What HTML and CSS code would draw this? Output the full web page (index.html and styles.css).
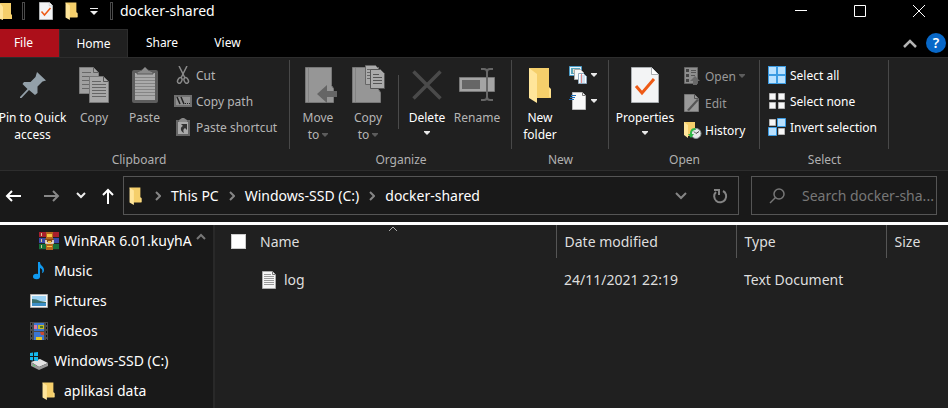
FILE: index.html
```html
<!DOCTYPE html>
<html lang="en">
<head>
<meta charset="utf-8">
<title>docker-shared</title>
<link rel="stylesheet" href="styles.css">
</head>
<body>
<svg class="defs" aria-hidden="true">
  <symbol id="folder" viewBox="0 0 24 36" preserveAspectRatio="none">
    <path d="M1 1h20v20l2 2v8H8z" fill="#f5cf6b"/>
    <path d="M1 1l8 6v29l-8-5z" fill="#ffe59a"/>
    <path d="M21 1v19l2 2v8h-2z" fill="#ffe08a"/>
  </symbol>
  <symbol id="check-page" viewBox="0 0 28 36">
    <path d="M.5.500h20l7 7v28H.5z" fill="#f3f4f5" stroke="#a9adb0"/>
    <path d="M20.500.5v7h7" fill="#fff" stroke="#a9adb0"/>
    <path d="M5 19l6 7 12-14" fill="none" stroke="#ee5a15" stroke-width="3"/>
  </symbol>
  <symbol id="caret" viewBox="0 0 6 4"><path d="M0 0h6v1L3 4 0 1z" fill="currentColor"/></symbol>
  <symbol id="chevron-right" viewBox="0 0 6 10"><path d="M1 1l4 4-4 4" fill="none" stroke="currentColor" stroke-width="2"/></symbol>
</svg>

<header class="titlebar">
  <div class="quick">
    <svg class="quick-folder" width="12" height="17" viewBox="0 0 12 17"><path d="M0 0h11v11l1 1v4H3z" fill="#f5cf6b"/><path d="M0 0l3 4v13L0 16z" fill="#ffe59a"/></svg>
    <span class="grip"></span>
    <button aria-label="Properties"><svg width="14" height="18"><use href="#check-page"/></svg></button>
    <button aria-label="New folder"><svg width="13" height="18"><use href="#folder"/></svg></button>
    <button aria-label="Customize"><svg width="8" height="7" viewBox="0 0 8 7"><path d="M0 0h8v1H0zM0 3h8L4 7z" fill="#eee"/></svg></button>
    <span class="grip"></span>
  </div>
  <h1>docker-shared</h1>
  <div class="window-controls">
    <button aria-label="Minimize"><svg width="12" height="12"><path d="M0 5.500h12" stroke="#fff"/></svg></button>
    <button aria-label="Maximize"><svg width="12" height="12"><path d="M.5.500h11v11H.5z" fill="none" stroke="#fff"/></svg></button>
    <button aria-label="Close"><svg width="12" height="12"><path d="M0 0l12 12M12 0L0 12" stroke="#fff"/></svg></button>
  </div>
</header>

<nav class="tabs">
  <button class="tab file">File</button>
  <button class="tab home">Home</button>
  <button class="tab share">Share</button>
  <button class="tab view">View</button>
  <button class="collapse" aria-label="Collapse ribbon"><svg width="14" height="9" viewBox="0 0 14 9"><path d="M1 8l6-6 6 6" fill="none" stroke="#b4b4b4" stroke-width="2.500"/></svg></button>
  <button class="help" aria-label="Help">?</button>
</nav>

<section class="ribbon">
  <div class="group clipboard">
    <div class="tools">
      <button class="big pin">
        <svg width="26" height="36" viewBox="0 0 26 36"><path d="M17 5l9 8.500-3.500 1-5 5v6.500l-2.500 2-6-5-7.500 8H0v-1l7.500-8-5-5 1.500-2h6.500l5-5z" fill="#93a0a9"/></svg>
        <span>Pin to Quick<br>access</span>
      </button>
      <button class="big copy dim">
        <svg width="30" height="36" viewBox="0 0 30 36">
          <path d="M.5.500h14l5 5v21H.5z" fill="#a0a0a0" stroke="#7c7c7c"/>
          <path d="M14.500.5v5h5" fill="none" stroke="#606060"/>
          <path d="M3 5.500h9M3 9.500h14M3 13.500h8M3 17.500h8M3 21.500h8" stroke="#686868"/>
          <path d="M10.500 9.500h14l5 5v21h-19z" fill="#a8a8a8" stroke="#777"/>
          <path d="M24.500 9.500v5h5" fill="none" stroke="#555"/>
          <path d="M13 14.500h9M13 17.500h14M13 20.500h14M13 23.500h14M13 26.500h14M13 29.500h14" stroke="#656565"/>
        </svg>
        <span>Copy</span>
      </button>
      <button class="big paste dim">
        <svg width="26" height="36" viewBox="0 0 26 36">
          <rect y="3" width="26" height="33" rx="2" fill="#5d5d5d"/>
          <path d="M3 6h20v27H3z" fill="#aaa"/>
          <path d="M3 10.500h20M3 13.500h20M3 16.500h20M3 19.500h20M3 22.500h20M3 25.500h20M3 28.500h20" stroke="#858585"/>
          <path d="M5 7V5l5-2 3-3 3 3 5 2v2z" fill="#8b8b8b" stroke="#595959"/>
        </svg>
        <span>Paste</span>
      </button>
      <div class="small-list dim">
        <button><svg width="18" height="18" viewBox="0 0 18 18"><path d="M5 0l6 12M13 0L7 12" stroke="#8a8a8a" stroke-width="1.500"/><ellipse cx="6" cy="14.500" rx="2" ry="3" fill="none" stroke="#8a8a8a" stroke-width="1.500" transform="rotate(25 6 14)"/><ellipse cx="12" cy="14.500" rx="2" ry="3" fill="none" stroke="#8a8a8a" stroke-width="1.500" transform="rotate(-25 12 14)"/></svg>Cut</button>
        <button><svg width="18" height="18" viewBox="0 0 18 18"><path d="M1 4h16v10H1z" fill="#929292" stroke="#707070" stroke-width="2"/><path d="M3 5l3 7M7 5l3 7" stroke="#222" stroke-width="1.500"/><path d="M11 11h1v1h-1zM13 11h1v1h-1zM15 11h1v1h-1z" fill="#222"/></svg>Copy path</button>
        <button><svg width="18" height="18" viewBox="0 0 18 18"><path d="M2 2h14v16H2z" fill="#666"/><path d="M4 4h10v12H4z" fill="#aaa"/><path d="M5 4V2l3-2h2l3 2v2z" fill="#888"/><path d="M7 6h6v6l-2-2c-2 1-2 3-1 5-4-2-4-6-1-7z" fill="#333"/></svg>Paste shortcut</button>
      </div>
    </div>
    <p>Clipboard</p>
  </div>

  <div class="group organize">
    <div class="tools">
      <button class="big move dim">
        <svg width="38" height="36" viewBox="0 0 38 36"><path d="M6.500.5h26v18l2 3v14h-28z" fill="#969696" stroke="#777"/><path d="M9.500 1v34" stroke="#838383"/><path d="M18 27l10-9v6h10v6H28v6z" fill="#656565"/></svg>
        <span>Move<br>to <svg class="caret" width="6" height="4"><use href="#caret"/></svg></span>
      </button>
      <button class="big copy-to dim">
        <svg width="34" height="38" viewBox="0 0 34 38"><path d="M1.500 2.500h26v22l2 3v10h-28z" fill="#969696" stroke="#777"/><path d="M4.500 3v34" stroke="#838383"/><path d="M14.500.5h10l4 4v15h-14z" fill="#aaa" stroke="#666"/><path d="M16 4.500h7M16 7.500h10M16 10.500h10M16 13.500h10" stroke="#666"/><path d="M19.500 4.500h10l4 4v15h-14z" fill="#aaa" stroke="#555"/><path d="M22 9.500h6M22 12.500h9M22 15.500h9M22 18.500h9" stroke="#555"/></svg>
        <span>Copy<br>to <svg class="caret" width="6" height="4"><use href="#caret"/></svg></span>
      </button>
      <span class="divider"></span>
      <button class="big delete">
        <svg width="30" height="36" viewBox="0 0 30 36"><path d="M1.500 4.500l27 27M28.500 4.500l-27 27" stroke="#4a4a4a" stroke-width="3.500"/></svg>
        <span>Delete</span>
        <svg class="caret" width="6" height="4"><use href="#caret"/></svg>
      </button>
      <button class="big rename dim">
        <svg width="36" height="36" viewBox="0 0 36 36"><path d="M.5 10.500h35v14H.5z" fill="#a4a4a4" stroke="#777"/><path d="M3 13h18v9H3z" fill="#666"/><path d="M22 2h3q3 0 3 3v25q0 3-3 3h-3M34 2h-3q-3 0-3 3M34 33h-3q-3 0-3-3" fill="none" stroke="#666" stroke-width="2"/></svg>
        <span>Rename</span>
      </button>
    </div>
    <p>Organize</p>
  </div>

  <div class="group new">
    <div class="tools">
      <button class="big new-folder">
        <svg width="24" height="36"><use href="#folder"/></svg>
        <span>New<br>folder</span>
      </button>
      <div class="small-list">
        <button aria-label="New item"><svg width="18" height="18" viewBox="0 0 18 18"><path d="M.5.500h12v9H.5z" fill="#e7f3fa" stroke="#4b9cc8"/><path d="M2 2h9v6H2z" fill="#57a4ba"/><path d="M4 3h3v4H4z" fill="#e8ddc4"/><path d="M5.500 3.500h6l3 3v7h-9z" fill="#f7f7f7" stroke="#aaa"/><path d="M9.500 7.500h5l3 3v7h-8z" fill="#fff" stroke="#8fa8bd"/><path d="M11 10h5M11 12h5M11 14h5M11 16h5" stroke="#a9c9e5"/><path d="M12.500 8v9" stroke="#e58b8b"/></svg><svg class="caret" width="6" height="4"><use href="#caret"/></svg></button>
        <button aria-label="Easy access"><svg width="18" height="18" viewBox="0 0 18 18"><path d="M3.500.500h10l3 3v14h-13z" fill="#f8f8f8" stroke="#bbb"/><path d="M13.500.500v3h3" fill="none" stroke="#777"/><path d="M2 3.500h5M1 5.500h5M0 7.500h5" stroke="#1c6cb5"/></svg><svg class="caret" width="6" height="4"><use href="#caret"/></svg></button>
      </div>
    </div>
    <p>New</p>
  </div>

  <div class="group open">
    <div class="tools">
      <button class="big properties">
        <svg width="28" height="36"><use href="#check-page"/></svg>
        <span>Properties</span>
        <svg class="caret" width="6" height="4"><use href="#caret"/></svg>
      </button>
      <div class="small-list">
        <button class="faint"><svg width="18" height="18" viewBox="0 0 18 18"><path d="M.5.500h13v16H.5z" fill="#8e8e8e" stroke="#666"/><path d="M2 2h3v3H2zM2 7h3v3H2zM2 12h3v3H2z" fill="#444"/><path d="M7 3.500h5M7 5.500h5M7 8.500h4M7 13.500h3" stroke="#555"/><path d="M11 9l5 5h-3v4H9v-4H6z" fill="#696969"/></svg>Open <svg class="caret" width="6" height="4"><use href="#caret"/></svg></button>
        <button class="faint"><svg width="18" height="18" viewBox="0 0 18 18"><path d="M.5.500h10l4 4v13H.5z" fill="#999" stroke="#777"/><path d="M3 16L13 5l2 1L5 17z" fill="#555"/><path d="M10.500.5v4h4" fill="none" stroke="#555"/></svg>Edit</button>
        <button><svg width="18" height="18" viewBox="0 0 18 18"><path d="M0 1h11v14H4l-4-2z" fill="#f5cf6b"/><path d="M0 1l4 3v13l-4-3z" fill="#ffe59a"/><circle cx="12" cy="12.500" r="5" fill="#e6e9e9" stroke="#8c9797"/><path d="M12 12.500l3-2M12 12.500l-2-2" stroke="#444"/><path d="M11 7c-4 0-5 3-5 6H4l3 4 3-4H8c0-3 1-4 4-4z" fill="#31b84b"/></svg>History</button>
      </div>
    </div>
    <p>Open</p>
  </div>

  <div class="group select">
    <div class="tools">
      <div class="small-list">
        <button><svg width="18" height="18" viewBox="0 0 18 18"><path d="M0 0h18v18H0z" fill="#3b9be2"/><path d="M1 1h7v7H1zM10 1h7v7h-7zM1 10h7v7H1zM10 10h7v7h-7z" fill="#b9e1ff"/></svg>Select all</button>
        <button><svg width="18" height="18" viewBox="0 0 18 18"><path d="M1.500 1.500h6v6h-6zM10.500 1.500h6v6h-6zM1.500 10.500h6v6h-6zM10.500 10.500h6v6h-6z" fill="#f6f6f6" stroke="#b5b5b5"/></svg>Select none</button>
        <button><svg width="18" height="18" viewBox="0 0 18 18"><path d="M1.500 1.500h6v6h-6zM10.500 10.500h6v6h-6z" fill="#f6f6f6" stroke="#b5b5b5"/><path d="M9.500.500h8v8h-8zM.5 9.500h8v8h-8z" fill="#b9e1ff" stroke="#3b9be2"/></svg>Invert selection</button>
      </div>
    </div>
    <p>Select</p>
  </div>
</section>

<div class="navbar">
  <div class="arrows">
    <button aria-label="Back"><svg width="16" height="12" viewBox="0 0 16 12"><path d="M16 6H2M7 1L2 6l5 5" fill="none" stroke="#fff" stroke-width="2"/></svg></button>
    <button aria-label="Forward"><svg width="16" height="12" viewBox="0 0 16 12"><path d="M0 6h14M9 1l5 5-5 5" fill="none" stroke="#888" stroke-width="2"/></svg></button>
    <button aria-label="Recent locations"><svg width="10" height="7" viewBox="0 0 10 7"><path d="M1 1l4 4 4-4" fill="none" stroke="#eee" stroke-width="2"/></svg></button>
    <button aria-label="Up"><svg width="12" height="16" viewBox="0 0 12 16"><path d="M6 16V2M1 7l5-5 5 5" fill="none" stroke="#fff" stroke-width="2"/></svg></button>
  </div>
  <div class="address">
    <svg width="13" height="18"><use href="#folder"/></svg>
    <svg class="sep" width="6" height="10"><use href="#chevron-right"/></svg>
    <a href="#pc">This PC</a>
    <svg class="sep" width="6" height="10"><use href="#chevron-right"/></svg>
    <a href="#c">Windows-SSD (C:)</a>
    <svg class="sep" width="6" height="10"><use href="#chevron-right"/></svg>
    <a href="#shared">docker-shared</a>
    <button class="history" aria-label="Previous locations"><svg width="12" height="8" viewBox="0 0 12 8"><path d="M1 1l5 5 5-5" fill="none" stroke="#858585" stroke-width="2"/></svg></button>
    <button class="refresh" aria-label="Refresh"><svg width="16" height="16" viewBox="0 0 16 16"><path d="M11 3a6 6 0 1 1-7 1" fill="none" stroke="#858585" stroke-width="2"/><path d="M2 2h5v5" fill="none" stroke="#858585" stroke-width="2"/></svg></button>
  </div>
  <label class="search">
    <svg width="16" height="16" viewBox="0 0 16 16"><circle cx="10" cy="6" r="5" fill="none" stroke="#777" stroke-width="1.500"/><path d="M6.500 9.500L1 15" stroke="#777" stroke-width="1.500"/></svg>
    <input type="text" aria-label="Search docker-shared" placeholder="Search docker-sha...">
  </label>
</div>

<main class="content">
  <aside class="sidebar">
    <ul>
      <li class="nested"><a href="#winrar"><svg width="20" height="18" viewBox="0 0 20 18"><path d="M0 0h20v6H0z" fill="#a91f2c"/><path d="M0 6h20v6H0z" fill="#3a4aa8"/><path d="M0 12h20v6H0z" fill="#17703a"/><path d="M0 5.500h20M0 11.500h20M0 17.500h20" stroke="#222"/><path d="M2.500 1v16" stroke="#d8c78d" stroke-dasharray="3 3"/><path d="M7 0h7v18H7z" fill="#b5651d"/><path d="M8 2h5v3H8z" fill="#f4c542"/><path d="M6 7h9v5H6z" fill="#8b4a12"/><path d="M7 8v3h7V8" fill="none" stroke="#eee" stroke-width="1.500"/><path d="M9 9h3v2H9zM8 14h5v1H8z" fill="#f4c542"/></svg><span>WinRAR 6.01.kuyhA</span></a></li>
      <li><a href="#music"><svg width="18" height="18" viewBox="0 0 18 18"><ellipse cx="6.500" cy="14.500" rx="3.500" ry="2.700" fill="#109af0"/><path d="M8 0h2c0 4 4 4 4 8 0 2-1 3-2 3 1-3 0-4-2-5v9H8z" fill="#109af0"/></svg><span>Music</span></a></li>
      <li><a href="#pictures"><svg width="18" height="18" viewBox="0 0 18 18"><path d="M.5 2.500h17v13H.5z" fill="#f7f7f7" stroke="#aaa"/><path d="M2 4h14v5H2z" fill="#9dd3f5"/><path d="M2 7q5 0 8 2l6 1v2H2z" fill="#39716e"/><path d="M2 11h14v3H2z" fill="#3e8fc7"/></svg><span>Pictures</span></a></li>
      <li><a href="#videos"><svg width="18" height="18" viewBox="0 0 18 18"><path d="M0 0h18v18H0z" fill="#4b4b4b"/><path d="M1.500 1v17M16.500 1v17" stroke="#111" stroke-dasharray="2 2"/><path d="M4 1h10v8H4zM4 10h10v8H4z" fill="#3b75d1"/><path d="M4 3h3v4H4z" fill="#d87ca5"/><path d="M8 3h6v4H8z" fill="#c9b927"/><path d="M10 4h3v2h-3z" fill="#41782d"/><path d="M10 10h4v3h-3z" fill="#c94b31"/><path d="M6 15h6v3H6z" fill="#e2c52b"/></svg><span>Videos</span></a></li>
      <li><a href="#ssd"><svg width="18" height="18" viewBox="0 0 18 18"><path d="M1 10l9-3 8 4-9 4z" fill="#e3e3e3"/><path d="M1 10l8 5v3l-8-4zM18 11l-9 4v3l9-4z" fill="#999"/><path d="M3 13l2 1" stroke="#46dc61"/><path d="M0 1l3-.5V4H0zM4 .4L8 0v4H4zM0 5h3v3.500L0 8zM4 5h4v4l-4-.4z" fill="#14b7ed"/></svg><span>Windows-SSD (C:)</span></a></li>
      <li class="nested"><a href="#data"><svg class="tree-folder" width="13" height="18"><use href="#folder"/></svg><span>aplikasi data</span></a></li>
    </ul>
    <button class="scroll-up" aria-label="Scroll up"><svg width="10" height="7" viewBox="0 0 10 7"><path d="M1 6l4-4 4 4" fill="none" stroke="#777" stroke-width="2"/></svg></button>
  </aside>
  <div class="files">
    <table>
      <colgroup><col class="c-check"><col class="c-name"><col class="c-date"><col class="c-type"><col></colgroup>
      <thead>
        <tr>
          <th class="check"><input type="checkbox" aria-label="Select all files"></th>
          <th class="name ruled">Name<svg class="sort" width="10" height="6" viewBox="0 0 10 6"><path d="M1 5l4-4 4 4" fill="none" stroke="#aaa"/></svg></th>
          <th class="ruled">Date modified</th>
          <th class="ruled">Type</th>
          <th>Size</th>
        </tr>
      </thead>
      <tbody>
        <tr>
          <td></td>
          <td class="name"><div class="file-name"><svg width="14" height="18" viewBox="0 0 14 18"><path d="M.5.500h10l3 3v14H.5z" fill="#f5f5f5" stroke="#aaa"/><path d="M10.500.500v3h3" fill="none" stroke="#777"/><path d="M2 3.500h7M2 5.500h10M2 7.500h10M2 9.500h10M2 11.500h10M2 13.500h10" stroke="#999"/></svg>log</div></td>
          <td>24/11/2021 22:19</td>
          <td>Text Document</td>
          <td></td>
        </tr>
      </tbody>
    </table>
  </div>
</main>
</body>
</html>
```
FILE: styles.css
```css
* { box-sizing: border-box; }

body {
  margin: 0;
  min-height: 100vh;
  display: flex;
  flex-direction: column;
  background: #191919;
  color: #fff;
  font: 14px/20px "Noto Sans", "Open Sans", sans-serif;
  overflow: hidden;
}

button {
  margin: 0;
  padding: 0;
  border: 0;
  background: none;
  color: inherit;
  font: inherit;
}

a { color: inherit; text-decoration: none; }
svg { display: block; flex: none; }
.defs { position: absolute; width: 0; height: 0; }

/* Title bar */
.titlebar {
  display: flex;
  align-items: center;
  height: 29px;
  padding-bottom: 7px;
  background: #000;
}
.quick { display: flex; align-items: center; }
.quick .grip {
  width: 3px;
  height: 18px;
  border: 1px solid #4a4a4a;
  margin-left: 10px;
}
.quick button { margin-left: 12px; }
.quick .grip + button { margin-left: 14px; }
.quick button + .grip { margin-left: 12px; }
.titlebar h1 { margin: 0 0 0 7px; font-size: 14px; font-weight: 400; }
.window-controls { display: flex; gap: 47px; margin-left: auto; padding-right: 23px; }

/* Tabs */
.tabs {
  display: flex;
  align-items: center;
  height: 28px;
  background: #000;
  font-size: 12px;
}
.tab { height: 28px; }
.tab.file { width: 59px; padding-right: 12px; background: #ac0f1a; }
.tab.home { width: 69px; border: 1px solid #2d2d2d; border-bottom: 0; background: #202020; }
.tab.share { width: 68px; }
.tab.view { width: 63px; }
.collapse { margin-left: auto; }
.help {
  width: 20px;
  height: 20px;
  margin: 0 2px 0 9px;
  border-radius: 50%;
  background: #0868c8;
  font-size: 14px;
  font-weight: 600;
}

/* Ribbon */
.ribbon {
  display: flex;
  height: 114px;
  border-top: 1px solid #2d2d2d;
  border-bottom: 1px solid #2d2d2d;
  background: #202020;
  font-size: 12px;
  line-height: 17px;
}
.group { position: relative; display: flex; flex-direction: column; flex: none; }
.group::after {
  content: "";
  position: absolute;
  top: 2px;
  right: 0;
  width: 1px;
  height: 89px;
  background: #484848;
}
.group p { margin: 0; color: #b0b0b0; text-align: center; }
.tools { display: flex; height: 93px; }
.clipboard { width: 290px; padding-right: 12px; }
.organize { width: 222px; }
.organize .tools, .new .tools, .open .tools { padding-left: 3px; }
.new { width: 97px; }
.open { width: 151px; }
.select { width: 129px; }
.clipboard p, .select p { padding: 0; }

.big { display: flex; flex-direction: column; align-items: center; padding-top: 9px; white-space: nowrap; }
.big > span { padding-top: 6px; }
.big > .caret { margin-top: 5px; }
.copy-to { padding-top: 7px; }
.dim { color: #b5b5b5; }
.faint { color: #999; }
.caret { display: inline-block; color: #e8e8e8; vertical-align: 2px; }
.dim .caret, .faint .caret { color: #5c5c5c; }
.pin { width: 65px; }
.copy { width: 58px; }
.paste { width: 43px; }
.move, .copy-to, .rename { width: 50px; }
.new-folder, .delete { width: 50px; }
.properties { width: 66px; }
.divider { width: 1px; height: 54px; margin: 17px 3px 0 5px; background: #4a4a4a; }

.small-list { display: flex; flex-direction: column; gap: 8px; padding: 8px 0 0 8px; }
.small-list button { display: flex; align-items: center; gap: 4px; height: 18px; white-space: nowrap; }
.new .small-list { padding-left: 4px; }
.new .small-list button { gap: 4px; }
.open .small-list { padding-left: 6px; gap: 9px; padding-top: 9px; }
.open .small-list button { gap: 3px; }

/* Navigation bar */
.navbar { display: flex; align-items: center; height: 51px; padding: 0 11px 2px 5px; }
.arrows { display: flex; align-items: center; gap: 16px; width: 118px; }
.arrows button:first-child { margin-right: 7px; }
.address {
  display: flex;
  align-items: center;
  flex: 1;
  min-width: 0;
  height: 39px;
  padding-left: 5px;
  border: 1px solid #555;
  white-space: nowrap;
}
.sep { color: #858585; margin: 0 10px; }
.address svg + .sep { margin-left: 13px; }
.history { margin-left: auto; }
.refresh { margin: 0 10px 0 25px; }
.search {
  display: flex;
  align-items: center;
  width: 186px;
  height: 39px;
  margin-left: 12px;
  padding-left: 17px;
  border: 1px solid #555;
}
.search input {
  flex: 1;
  min-width: 0;
  margin-left: 17px;
  padding: 0;
  border: 0;
  outline: 0;
  background: none;
  color: #fff;
  font: inherit;
}
.search input::placeholder { color: #777; opacity: 1; }

/* Folder tree */
.content { display: flex; flex: 1; border-top: 3px solid #fff; }
.sidebar { position: relative; flex: none; width: 215px; border-right: 2px solid #292929; }
.sidebar ul { margin: 0; padding: 1px 0 0; list-style: none; }
.sidebar a { display: flex; align-items: center; gap: 6px; height: 30px; padding-left: 30px; }
.sidebar .nested a { padding-left: 39px; gap: 5px; }
.tree-folder { margin: 0 4px 0 3px; }
.sidebar span { white-space: nowrap; }
.scroll-up { position: absolute; top: 8px; right: 7px; }

/* File list */
.files { flex: 1; min-width: 0; background: #202020; }
table { width: 100%; table-layout: fixed; border-collapse: collapse; }
.c-check { width: 37px; }
.c-name { width: 304px; }
.c-date { width: 180px; }
.c-type { width: 150px; }
th, td { padding: 0 0 0 8px; font-weight: 400; text-align: left; color: #dedede; white-space: nowrap; }
th { height: 33px; }
td { height: 44px; }
.ruled { border-right: 1px solid #555; }
th.name { position: relative; }
.sort { position: absolute; top: 1px; left: 136px; }
.check { padding-left: 16px; }
.check input {
  display: block;
  appearance: none;
  width: 15px;
  height: 15px;
  margin: 0;
  border: 1px solid #ccc;
  background: #fff;
}
.file-name { display: flex; align-items: center; gap: 8px; padding-left: 2px; }
```
